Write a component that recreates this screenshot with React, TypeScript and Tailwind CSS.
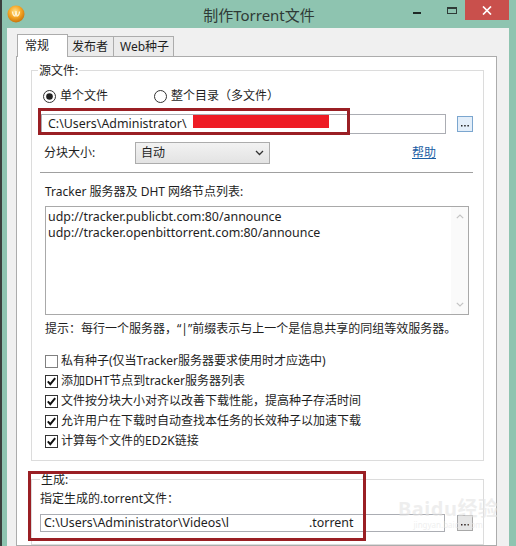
import React from 'react';

const CheckBox: React.FC<{ checked?: boolean; label: string }> = ({ checked, label }) => (
  <div className="flex h-[20px] items-center">
    <svg width="13" height="13" viewBox="0 0 13 13" className="ml-[5px] shrink-0">
      <rect x="0.5" y="0.5" width="12" height="12" fill="#fff" stroke={checked ? '#333' : '#808080'} />
      {checked && <path d="M2.8 6.4 L5.3 9.2 L10.2 3.2" stroke="#111" strokeWidth="2" fill="none" />}
    </svg>
    <span className="ml-[3px]">{label}</span>
  </div>
);

const Radio: React.FC<{ on?: boolean; label: string }> = ({ on, label }) => (
  <div className="flex items-center">
    <svg width="13" height="13" viewBox="0 0 13 13" className="shrink-0">
      <circle cx="6.5" cy="6.5" r="6" fill="#fff" stroke="#333" />
      {on && <circle cx="6.5" cy="6.5" r="3.3" fill="#222" />}
    </svg>
    <span className="ml-[4px]">{label}</span>
  </div>
);

// small browse button, the three dots are drawn
const DotsButton: React.FC<{ active?: boolean }> = ({ active }) => (
  <div
    className={`flex h-[16px] w-[16px] items-end justify-center pb-[4px] ${
      active ? 'border border-[#7ba6cf] bg-[#e3eef9]' : 'border border-[#a8a8a8] bg-[#e6e6e6]'
    }`}
  >
    <svg width="8" height="2" viewBox="0 0 8 2">
      <rect x="0" y="0" width="1.5" height="1.5" fill="#222" />
      <rect x="3.2" y="0" width="1.5" height="1.5" fill="#222" />
      <rect x="6.4" y="0" width="1.5" height="1.5" fill="#222" />
    </svg>
  </div>
);

export default function App() {
  return (
    <div className="relative flex h-[546px] w-[516px] overflow-hidden bg-[#8ec4b0] font-['Noto_Sans','Noto_Sans_CJK_SC',sans-serif] text-[12px] text-[#1e1e1e]">
      <div className="w-[2px] shrink-0 bg-[#3b3f3d]" />

      {/* window */}
      <div className="flex flex-1 flex-col pl-[5px] pr-[7px]">
        {/* title bar */}
        <div className="grid h-[29px] grid-cols-[1fr_auto_1fr] -ml-[5px] -mr-[7px]">
          <div className="flex items-start pl-[5px] pt-[5px]">
            <svg width="18" height="18" viewBox="0 0 18 18">
              <defs>
                <radialGradient id="ball" cx="45%" cy="35%" r="65%">
                  <stop offset="0%" stopColor="#ffe08a" />
                  <stop offset="55%" stopColor="#f5a524" />
                  <stop offset="100%" stopColor="#c8740c" />
                </radialGradient>
              </defs>
              <circle cx="9" cy="9" r="8.5" fill="url(#ball)" />
              <path d="M5.5 6.5 Q6 11 8 11 Q9 8 9 6 Q9 8 10 11 Q12 11 12.5 6.5" stroke="#fff6d8" strokeWidth="1.3" fill="none" />
            </svg>
          </div>
          <div className="pt-[4px] text-[15px] leading-[22px] text-[#2e3a36]">制作Torrent文件</div>
          <div className="flex items-start justify-end pr-[7px]">
            <div className="mr-[8px] mt-[12px] h-[2px] w-[8px] bg-[#1f2a26]" />
            <div className="mr-[8px] ml-[18px] mt-[7px] h-[7px] w-[10px] border border-t-2 border-[#2f3b37]" />
            <div className="flex h-[20px] w-[44px] items-center justify-center bg-[#c9504c]">
              <svg width="10" height="9" viewBox="0 0 10 9">
                <path d="M1 0.5 L9 8.5 M9 0.5 L1 8.5" stroke="#fff" strokeWidth="1.7" />
              </svg>
            </div>
          </div>
        </div>

        {/* client area */}
        <div className="flex flex-1 flex-col bg-[#f0f0f0] pt-[6px]">
          {/* tabs */}
          <div className="relative z-10 ml-[10px] flex items-end">
            <div className="-mb-px h-[23px] w-[51px] border-x border-t border-[#acacac] bg-white pl-[7px] pt-[1px] leading-[20px]">常规</div>
            <div className="h-[20px] w-[46px] border-t border-r border-[#acacac] bg-[#ebebeb] pl-[4px] leading-[19px]">发布者</div>
            <div className="h-[20px] w-[60px] border-t border-r border-[#acacac] bg-[#ebebeb] pl-[6px] leading-[19px]">Web种子</div>
          </div>

          {/* panel */}
          <div className="ml-[9px] mr-[12px] flex-1 border border-[#acacac] bg-white">
            {/* group 1 */}
            <div className="ml-[14px] mr-[12px] mt-[13px] border border-[#dcdcdc] px-[8px] pb-[9px]">
              <div className="-mt-[8px] -ml-[2px] w-fit bg-white px-[1px] leading-[16px]">源文件:</div>

              <div className="mt-[9px] flex h-[16px] items-center pl-[3px]">
                <Radio on label="单个文件" />
                <div className="ml-[46px]">
                  <Radio label="整个目录（多文件）" />
                </div>
              </div>

              <div className="mt-[10px] flex items-center">
                <div className="ml-[1px] h-[20px] w-[405px] border border-[#abadb3] bg-white pl-[6px] text-[12.4px] leading-[18px]">
                  C:\Users\Administrator\
                </div>
                <div className="ml-[11px]">
                  <DotsButton active />
                </div>
              </div>

              <div className="mt-[8px] flex h-[22px] items-center">
                <span className="ml-[4px] w-[91px]">分块大小:</span>
                <div className="flex h-[22px] w-[135px] items-center justify-between border border-[#acacac] bg-gradient-to-b from-[#f2f2f2] to-[#e3e3e3] pl-[5px] pr-[5px]">
                  <span>自动</span>
                  <svg width="9" height="6" viewBox="0 0 9 6">
                    <path d="M1 1 L4.5 4.5 L8 1" stroke="#333" strokeWidth="1.3" fill="none" />
                  </svg>
                </div>
                <span className="ml-[142px] text-[#1a5ea4] underline">帮助</span>
              </div>

              <div className="mt-[8px] mr-[2px] h-px bg-[#a0a0a0]" />

              <div className="mt-[11px] ml-[5px] leading-[16px]">Tracker 服务器及 DHT 网络节点列表:</div>

              <div className="ml-[5px] mt-[6px] flex h-[109px] w-[424px] border border-[#a9a9a9] bg-white">
                <div className="flex-1 pl-[2px] pt-[2px] text-[12.4px] leading-[16px]">
                  <div>udp://tracker.publicbt.com:80/announce</div>
                  <div>udp://tracker.openbittorrent.com:80/announce</div>
                </div>
                <div className="flex w-[17px] flex-col items-center justify-between bg-[#fafafa] py-[7px]">
                  <svg width="8" height="5" viewBox="0 0 8 5">
                    <path d="M0.8 4.2 L4 1 L7.2 4.2" stroke="#c4c4c4" strokeWidth="1.2" fill="none" />
                  </svg>
                  <svg width="8" height="5" viewBox="0 0 8 5">
                    <path d="M0.8 0.8 L4 4 L7.2 0.8" stroke="#c4c4c4" strokeWidth="1.2" fill="none" />
                  </svg>
                </div>
              </div>

              <div className="ml-[5px] mt-[6px] leading-[16px]">
                提示：每行一个服务器，“|”前缀表示与上一个是信息共享的同组等效服务器。
              </div>

              <div className="mt-[14px]">
                <CheckBox label="私有种子(仅当Tracker服务器要求使用时才应选中)" />
                <CheckBox checked label="添加DHT节点到tracker服务器列表" />
                <CheckBox checked label="文件按分块大小对齐以改善下载性能，提高种子存活时间" />
                <CheckBox checked label="允许用户在下载时自动查找本任务的长效种子以加速下载" />
                <CheckBox checked label="计算每个文件的ED2K链接" />
              </div>
            </div>

            {/* group 2 */}
            <div className="ml-[14px] mr-[12px] mt-[18px] border border-[#dcdcdc] px-[8px] pb-[12px]">
              <div className="-mt-[8px] w-fit bg-white px-[1px] leading-[16px]">生成:</div>
              <div className="mt-[3px] leading-[16px]">指定生成的.torrent文件：</div>
              <div className="mt-[7px] flex items-center">
                <div className="flex h-[18px] w-[405px] items-center border border-[#abadb3] bg-white pl-[3px] text-[12.4px] leading-[16px]">
                  <span>C:\Users\Administrator\Videos\l</span>
                  <span className="ml-[80px]">.torrent</span>
                </div>
                <div className="ml-[12px]">
                  <DotsButton />
                </div>
              </div>
            </div>
          </div>
        </div>
      </div>

      {/* annotation overlays */}
      <div className="absolute left-[193px] top-[115px] h-[13px] w-[136px] bg-[#ee1c25]" />
      <div className="absolute left-[38px] top-[108px] h-[27px] w-[312px] border-[3px] border-[#9a1f24]" />
      <div className="absolute left-[28px] top-[471px] h-[70px] w-[338px] border-[3px] border-[#9a1f24]" />

      {/* watermark */}
      <div className="absolute left-[398px] top-[498px] flex flex-col items-center text-[#e4e4e4]/60">
        <span className="text-[20px] font-bold leading-[22px] tracking-wide">Baidu经验</span>
        <span className="text-[8px] leading-[9px]">jingyan.baidu.com</span>
      </div>
    </div>
  );
}
